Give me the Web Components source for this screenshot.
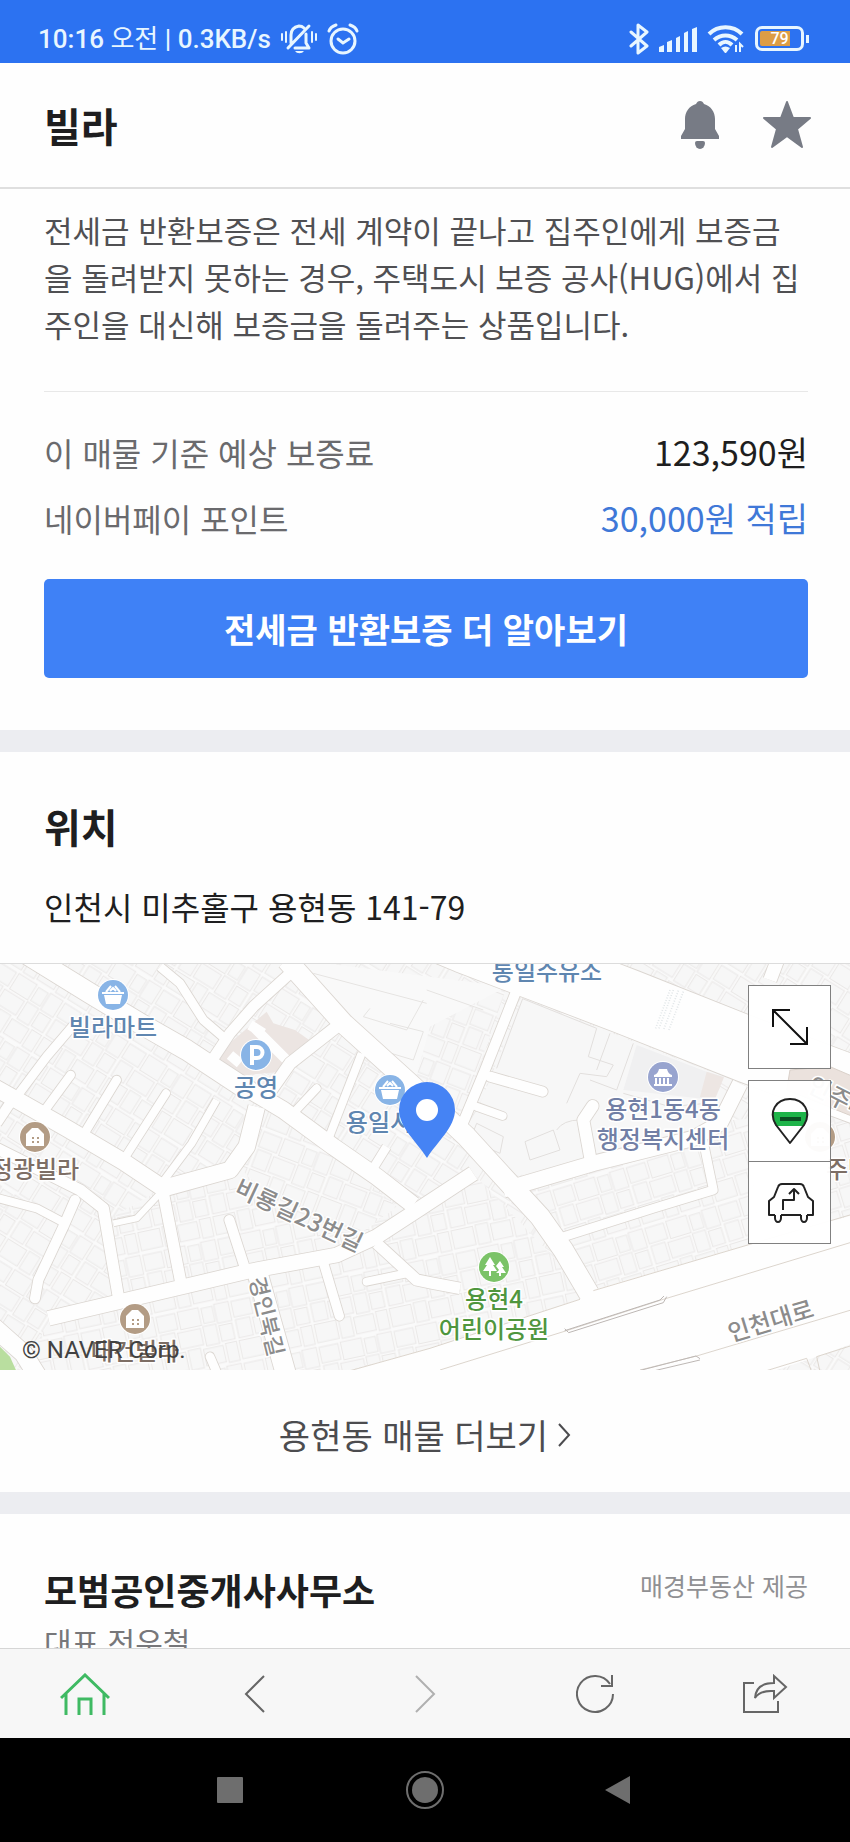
<!DOCTYPE html>
<html lang="ko">
<head>
<meta charset="UTF-8">
<meta name="viewport" content="width=device-width, initial-scale=1.0">
<title>빌라</title>
<style>
    *{
        box-sizing: border-box;
    }
    body{
        margin: 0;
        height: 100vh;
        display: flex;
        flex-direction: column;
        background: #fefefe;
        color: #1e1e20;
        font-family: "Noto Sans CJK KR", "Noto Sans", sans-serif;
        font-size: 32px;
        line-height: 48px;
        --gutter: 44px;
        --blue: #3f81f6;
        --band: #ecedf1;
    }
    main{
        flex: 1;
        min-height: 0;
        overflow: hidden;
    }
</style>
</head>
<body>
    <status-bar time="10:16 오전" speed="0.3KB/s" battery="79"></status-bar>
    <page-header>빌라</page-header>
    <main>
        <guarantee-info>
            전세금 반환보증은 전세 계약이 끝나고 집주인에게 보증금을 돌려받지 못하는 경우, 주택도시 보증 공사(HUG)에서 집주인을 대신해 보증금을 돌려주는 상품입니다.
            <cost-row slot="rows" label="이 매물 기준 예상 보증료">123,590원</cost-row>
            <cost-row slot="rows" label="네이버페이 포인트" highlight>30,000원 적립</cost-row>
            <span slot="action">전세금 반환보증 더 알아보기</span>
        </guarantee-info>
        <location-section>
            <span slot="title">위치</span>
            <span slot="address">인천시 미추홀구 용현동 141-79</span>
            <location-map></location-map>
            <span slot="more">용현동 매물 더보기</span>
        </location-section>
        <broker-info>
            모범공인중개사사무소
            <span slot="source">매경부동산 제공</span>
            <span slot="owner">대표 전우철</span>
        </broker-info>
    </main>
    <tab-bar></tab-bar>
    <system-nav></system-nav>

<script>
class BaseElement extends HTMLElement{
    constructor(){
        super()
        this.attachShadow({mode: 'open'})
    }

    render(){
        const template = document.createElement('template')
        template.innerHTML = this.getStyles() + this.getTemplate()
        this.shadowRoot.appendChild(template.content.cloneNode(true))
    }

    connectedCallback(){
        this.render()
    }
}

class StatusBar extends BaseElement{
    getStyles(){
        return `
            <style>
                :host{
                    display: flex;
                    justify-content: space-between;
                    align-items: center;
                    height: 63px;
                    padding: 14px 41px 0 38px;
                    box-sizing: border-box;
                    background: #2c72f1;
                    color: #e8f6ff;
                    font: 500 26px/32px Roboto, "Noto Sans CJK KR", sans-serif;
                }
                .side{
                    display: flex;
                    align-items: center;
                    gap: 10px;
                }
                .am{
                    font-weight: 400;
                }
                .battery{
                    display: flex;
                    align-items: center;
                    gap: 2px;
                }
                .battery-box{
                    width: 49px;
                    height: 25px;
                    box-sizing: border-box;
                    border: 3px solid #e8f6ff;
                    border-radius: 7px;
                    padding: 2px;
                    color: #fff;
                    font-size: 16px;
                    line-height: 15px;
                    text-align: center;
                    background: linear-gradient(90deg, #dd9d45 76%, transparent 76%) content-box;
                }
                .battery-tip{
                    width: 3px;
                    height: 8px;
                    background: #e8f6ff;
                }
                svg{
                    display: block;
                }
            </style>
        `
    }

    getTemplate(){
        const [clock, half] = this.getAttribute('time').split(' ')
        return `
            <div class="side">
                <span>${clock} <span class="am">${half}</span> | ${this.getAttribute('speed')}</span>
                <svg width="36" height="32" viewBox="0 0 36 32" fill="none" stroke="#e8f6ff" stroke-width="3" stroke-linecap="round" stroke-linejoin="round">
                    <path d="M10 20V12c0-5 3-8 8-9 2 0 4 1 5 2M14 25h14l-3-5v-9M7 25L28 3"/>
                    <path d="M1 11v6M5 9v10M31 9v10M35 11v6" stroke-width="2"/>
                    <path d="M14 28h9a5 4 0 0 1-9 0z" fill="#e8f6ff" stroke="none"/>
                </svg>
                <svg width="32" height="32" viewBox="0 0 32 32" fill="none" stroke="#e8f6ff" stroke-width="3" stroke-linecap="round">
                    <circle cx="16" cy="18" r="12"/>
                    <path d="M11 16l5 4 6-4M2 8c1-3 4-5 7-6M30 8c-1-3-4-5-7-6"/>
                </svg>
            </div>
            <div class="side">
                <svg width="20" height="32" viewBox="0 0 20 32" fill="none" stroke="#e8f6ff" stroke-width="3" stroke-linejoin="round" stroke-linecap="round">
                    <path d="M2 9l16 14-9 7V2l9 7L2 23"/>
                </svg>
                <svg width="38" height="26" viewBox="0 0 38 26" fill="#e8f6ff">
                    <path d="M0 26v-5l5-2v7zM8 26V16l5-2v12zM17 26V12l4-2v16zM25 26V7l4-2v21zM33 26V3l5-2v25z"/>
                </svg>
                <svg width="38" height="28" viewBox="0 0 38 28" fill="none" stroke="#e8f6ff" stroke-width="4">
                    <path d="M2 9c9-9 24-9 33 0M7 15c7-6 16-6 23 0M12 20c4-4 9-4 13 0"/>
                    <path d="M14 23c3-2 6-2 9 0l-4 5h-1z" fill="#e8f6ff" stroke="none"/>
                    <path d="M29 20v7M33 27v-8l3 3" stroke-width="2"/>
                </svg>
                <div class="battery">
                    <div class="battery-box">${this.getAttribute('battery')}</div>
                    <div class="battery-tip"></div>
                </div>
            </div>
        `
    }
}

class PageHeader extends BaseElement{
    getStyles(){
        return `
            <style>
                :host{
                    display: flex;
                    justify-content: space-between;
                    align-items: center;
                    height: 126px;
                    padding: 0 38px 0 var(--gutter);
                    box-sizing: border-box;
                    border-bottom: 2px solid #dfdfdf;
                }
                h1{
                    margin: 0;
                    font-size: 40px;
                    line-height: 56px;
                    font-weight: 700;
                }
                .actions{
                    display: flex;
                    gap: 42px;
                }
                button{
                    border: 0;
                    padding: 0;
                    background: none;
                    color: #777b85;
                }
                svg{
                    display: block;
                }
            </style>
        `
    }

    getTemplate(){
        return `
            <h1><slot></slot></h1>
            <div class="actions">
                <button type="button" aria-label="알림">
                    <svg width="40" height="50" viewBox="0 0 40 50" fill="currentColor">
                        <path d="M20 1c2 0 3 1 4 3 7 2 11 8 11 15v10l4 7v3H1v-3l4-7V19C5 12 9 6 16 4c1-2 2-3 4-3z"/>
                        <path d="M15 43q0-2 2-2h6q2 0 2 2a5 6 0 0 1-10 0z"/>
                    </svg>
                </button>
                <button type="button" aria-label="관심매물">
                    <svg width="50" height="50" viewBox="0 0 50 50" fill="currentColor" stroke="currentColor" stroke-width="2" stroke-linejoin="round">
                        <path d="M25 2l6 16h17L35 29l5 18-15-11-15 11 5-18L2 18h17z"/>
                    </svg>
                </button>
            </div>
        `
    }
}

class CostRow extends BaseElement{
    getStyles(){
        return `
            <style>
                :host{
                    display: flex;
                    justify-content: space-between;
                    color: #1e1e20;
                }
                :host([highlight]){
                    color: #3f78d8;
                }
                .label{
                    color: #6a6a6d;
                }
                .value{
                    font-size: 34px;
                }
            </style>
        `
    }

    getTemplate(){
        return `
            <span class="label">${this.getAttribute('label')}</span>
            <span class="value"><slot></slot></span>
        `
    }
}

class GuaranteeInfo extends BaseElement{
    getStyles(){
        return `
            <style>
                :host{
                    display: block;
                    padding: 17px 42px 52px var(--gutter);
                    border-bottom: 22px solid var(--band);
                }
                p{
                    margin: 0;
                    padding-right: 4px;
                    color: #505053;
                    font-size: 31px;
                    line-height: 47px;
                    word-break: break-all;
                }
                .rows{
                    display: flex;
                    flex-direction: column;
                    gap: 18px;
                    margin: 44px 0 37px;
                    padding-top: 36px;
                    border-top: 1px solid #e8e8e8;
                }
                button{
                    display: block;
                    width: 100%;
                    height: 99px;
                    border: 0;
                    border-radius: 5px;
                    background: var(--blue);
                    color: #fff;
                    font: inherit;
                    font-size: 34px;
                    font-weight: 700;
                }
            </style>
        `
    }

    getTemplate(){
        return `
            <p><slot></slot></p>
            <div class="rows"><slot name="rows"></slot></div>
            <button type="button"><slot name="action"></slot></button>
        `
    }
}

class LocationSection extends BaseElement{
    getStyles(){
        return `
            <style>
                :host{
                    display: block;
                    border-bottom: 22px solid var(--band);
                }
                .head{
                    display: flex;
                    flex-direction: column;
                    gap: 28px;
                    padding: 46px var(--gutter) 33px;
                }
                h2{
                    margin: 0;
                    font-size: 40px;
                    line-height: 56px;
                    font-weight: 700;
                }
                p{
                    margin: 0;
                }
                .more{
                    display: flex;
                    justify-content: center;
                    align-items: center;
                    gap: 9px;
                    height: 122px;
                    padding-top: 8px;
                    box-sizing: border-box;
                    font-size: 34px;
                    color: #4c4c4f;
                    text-decoration: none;
                }
            </style>
        `
    }

    getTemplate(){
        return `
            <div class="head">
                <h2><slot name="title"></slot></h2>
                <p><slot name="address"></slot></p>
            </div>
            <slot></slot>
            <a class="more" href="#">
                <slot name="more"></slot>
                <svg width="14" height="24" viewBox="0 0 14 24" fill="none" stroke="currentColor" stroke-width="2">
                    <path d="M2 1l10 11L2 23"/>
                </svg>
            </a>
        `
    }
}

// all road and block coordinates are in a 2550 x 1218 space, three units per map pixel
const ROADS = [
    {width: 60, d: 'M60 -30L270 100L420 190L560 270L750 395'},
    {width: 50, d: 'M740 385L850 450L1000 560L1130 650L1240 735'},
    {width: 60, d: 'M860 0L1030 190L1240 380L1400 530L1500 640L1620 770L1690 870L1790 1040'},
    {width: 50, d: 'M-30 375L60 425L200 505L370 605L490 685L690 630L740 560L770 440'},
    {width: 34, d: 'M488 690L545 980'},
    {width: 44, d: 'M145 1075L550 980L740 935L1010 885L1130 830L1260 745L1420 640'},
    {width: 34, d: 'M-30 555L240 690L310 745L355 1010'},
    {width: 24, d: 'M-30 708L110 745L195 790'},
    {width: 30, d: 'M225 720L190 800L115 960L105 1015', round: true},
    {width: 26, d: 'M50 410L140 290L225 190'},
    {width: 30, d: 'M-10 490L40 415'},
    {width: 30, d: 'M688 780L735 925', round: true},
    {width: 28, d: 'M965 890L1018 1068', round: true},
    {width: 32, d: 'M870 40L760 140L690 220L630 310'},
    {width: 26, d: 'M480 20L540 70L610 180L680 240'},
    {width: 36, d: 'M1010 200L870 310L800 410'},
    {width: 26, d: 'M212 345L135 450', round: true},
    {width: 26, d: 'M350 360L250 525', round: true},
    {width: 24, d: 'M498 400L370 600', round: true},
    {width: 22, d: 'M650 420L575 550L485 670'},
    {width: 24, d: 'M950 385L870 470', round: true},
    {width: 24, d: 'M1085 280L980 550'},
    {width: 26, d: 'M1160 560L1110 640'},
    {width: 18, d: 'M340 790L410 775L480 700'},
    {width: 34, d: 'M1130 850L1250 960L1300 970L1380 985'},
    {width: 24, d: 'M1220 940L1100 965', round: true},
    {width: 60, d: 'M770 930L860 1250'},
    {width: 26, d: 'M630 1190L660 1260', round: true},
    {width: 30, d: 'M1550 90L1455 330L1380 510'},
    {width: 30, d: 'M1470 350L1628 395', round: true},
    {width: 24, d: 'M1430 440L1508 468', round: true},
    {width: 46, d: 'M1510 690L1780 610L2080 535L2160 490L2220 370'},
    {width: 36, d: 'M1772 600L1750 480L1778 438', round: true},
    {width: 26, d: 'M2105 520L2140 690L1960 745L1660 840'},
    {width: 196, d: 'M1180 -150L1400 -58L1880 125L2245 270L2700 440'},
    {width: 40, d: 'M2310 60L2340 -20'},
    {width: 54, d: 'M-20 1100L70 1180L120 1260'}
]

const POIS = [
    {x: 113, y: 31, icon: 'basket', color: '#88b4e6', text: '#5f86b0', lines: ['빌라마트']},
    {x: 256, y: 91, icon: 'parking', color: '#88b4e6', text: '#5f86b0', lines: ['공영']},
    {x: 390, y: 126, icon: 'basket', color: '#88b4e6', text: '#5f86b0', lines: ['용일시장']},
    {x: 35, y: 173, icon: 'house', color: '#b39c85', text: '#7d6e65', lines: ['정광빌라']},
    {x: 135, y: 355, icon: 'house', color: '#b39c85', text: '#7d6e65', lines: ['대건빌라']},
    {x: 663, y: 113, icon: 'office', color: '#98a4cf', text: '#727fa5', lines: ['용현1동4동', '행정복지센터']},
    {x: 494, y: 303, icon: 'trees', color: '#7bc368', text: '#4f963e', lines: ['용현4', '어린이공원']},
    {x: 820, y: 173, icon: 'house', color: '#b39c85', text: '#7d6e65', lines: []}
]

const POI_ICONS = {
    basket: '<path d="M-9 0H9L7 9H-7zM-11 -3H11V-1H-11z" fill="#fff"/><path d="M-7 -3L-2 -9M7 -3L2 -9M-3 -4L0 -7L3 -4" stroke="#fff" stroke-width="2" fill="none"/>',
    parking: '<path d="M-4 10V-8H1a5 5 0 0 1 0 11H-4" fill="none" stroke="#fff" stroke-width="4"/>',
    house: '<path d="M-9 9V-3L-3 -9H3L9 -3V9z" fill="#fff"/><path d="M-3 0h2v2h-2zM2 0h2v2h-2zM-3 4h2v2h-2zM2 4h2v2h-2z" fill="#b39c85"/>',
    office: '<path d="M-9 -2Q-5 -3 -4 -8H4Q5 -3 9 -2V0H-9zM-8 1h2v6h-2zM-4 1h2v6h-2zM0 1h2v6h-2zM4 1h2v6h-2zM-9 7H9V9H-9z" fill="#fff"/>',
    trees: '<path d="M-4 -10L1 -2H-1L3 4H-3V9H-5V4H-11L-7 -2H-9zM6 -6L10 0H8L12 6H7V9H5V6H2L5 3L2 -1z" fill="#fff"/>'
}

class LocationMap extends BaseElement{
    getStyles(){
        return `
            <style>
                :host{
                    display: block;
                    position: relative;
                    height: 407px;
                    overflow: hidden;
                    border-top: 1px solid #dcdcdc;
                    box-sizing: border-box;
                }
                .map{
                    display: block;
                    width: 100%;
                    height: 100%;
                }
                .map text{
                    font-size: 24px;
                    font-weight: 500;
                    paint-order: stroke;
                    stroke: #fff;
                    stroke-width: 3px;
                    stroke-linejoin: round;
                }
                .map .street{
                    fill: #8c8c8c;
                }
                .controls{
                    position: absolute;
                    top: 21px;
                    right: 19px;
                    display: flex;
                    flex-direction: column;
                }
                .controls button{
                    display: flex;
                    justify-content: center;
                    align-items: center;
                    width: 83px;
                    height: 82px;
                    padding: 0;
                    border: 1px solid #808080;
                    background: #fffffff5;
                }
                .controls button:first-child{
                    height: 84px;
                    margin-bottom: 11px;
                }
                .controls button:last-child{
                    border-top: 0;
                    padding-left: 3px;
                }
                .copyright{
                    position: absolute;
                    left: 22px;
                    bottom: 6px;
                    color: #424242;
                    font: 24px/28px Roboto, sans-serif;
                }
            </style>
        `
    }

    getRoads(){
        const line = (road, color, extra) => `<path d="${road.d}" stroke="${color}" stroke-width="${road.width + extra}" stroke-linecap="${road.round ? 'round' : 'butt'}"/>`
        return ROADS.map(road => line(road, '#dbd6d1', 5)).join('') + ROADS.map(road => line(road, '#fefefe', 0)).join('')
    }

    getPois(){
        return POIS.map(poi => `
            <g transform="translate(${poi.x} ${poi.y})">
                <circle r="16" fill="#fff"/>
                <circle r="15" fill="${poi.color}"/>
                ${POI_ICONS[poi.icon]}
                ${poi.lines.map((line, i) => `<text y="${41 + i * 30}" text-anchor="middle" fill="${poi.text}">${line}</text>`).join('')}
            </g>
        `).join('')
    }

    getLots(name, angle){
        return `
            <pattern id="${name}" width="230" height="190" patternUnits="userSpaceOnUse" patternTransform="rotate(${angle})">
                <path d="M4 6h58v48H4zM70 4h64v54H70zM142 8h34v46h-34zM182 4h44v58h-44zM6 62h44v56H6zM58 66h70v50H58zM136 62h40v60h-40zM184 70h40v48h-40zM4 126h66v56H4zM78 124h38v60H78zM124 130h60v50h-60zM192 126h34v58h-34z" fill="#f7f7f7" stroke="#eae8e7" stroke-width="3"/>
            </pattern>
        `
    }

    getTemplate(){
        return `
            <svg class="map" viewBox="0 0 850 406" preserveAspectRatio="xMidYMid slice">
                <defs>
                    ${this.getLots('lots-a', 32)}
                    ${this.getLots('lots-b', -12)}
                    ${this.getLots('lots-c', -17)}
                    ${this.getLots('lots-d', 21)}
                </defs>
                <rect width="850" height="406" fill="#fafafa"/>
                <g transform="translate(0 -4) scale(.33333)" fill="none" stroke-linejoin="round">
                    <path d="M0 0H2550V1240H0z" fill="url(#lots-a)"/>
                    <path d="M340 770L480 690L700 640L1230 740L1420 640L1800 1040L1000 1240H60L150 1080L340 1000z" fill="#fafafa"/>
                    <path d="M340 770L480 690L700 640L1230 740L1420 640L1800 1040L1000 1240H60L150 1080L340 1000z" fill="url(#lots-b)"/>
                    <path d="M715 620L790 445L1000 580L1190 740L1080 820L900 800z" fill="#fafafa"/>
                    <path d="M715 620L790 445L1000 580L1190 740L1080 820L900 800z" fill="url(#lots-d)"/>
                    <path d="M1540 680L2200 480L2550 460V800L1780 1000z" fill="#fafafa"/>
                    <path d="M1540 680L2200 480L2550 460V800L1780 1000z" fill="url(#lots-c)"/>
                    <path d="M900 0L1520 80L1370 520L1240 380L1040 190z" fill="#f9f9f9"/>
                    <path d="M1290 200L1520 80L1370 520L1240 380z" fill="url(#lots-d)"/>
                    <path d="M1568 116L2170 350L2100 520L1700 620L1505 655L1400 530z" fill="#f7f7f7"/>
                    <path d="M940 40L1280 130M1270 120L1220 210L1090 170L1110 145M1170 190L1270 215L1240 300L1140 270M1280 90L1450 150" stroke="#e6e4e2" stroke-width="3"/>
                    <path d="M1490 325L1568 116L1790 205L1765 290L1840 315L1820 350L1740 340L1700 430M1830 220L1790 330M1900 250L1850 390L1770 360M1410 540L1430 490L1510 530L1500 580zM1575 545L1660 510L1680 570L1590 600zM1670 510Q1690 480 1740 480M1870 400L2010 440L2120 430" stroke="#e2dfdd" stroke-width="3"/>
                    <path d="M1910 255L2120 335L2170 350L2140 420L1870 390z" fill="#f0f0f1"/>
                    <path d="M2120 335L2172 352L2140 430L2100 410z" fill="#ede6e3"/>
                    <path d="M800 155L820 190L885 210L935 245L870 297L845 335L690 350L632 322L700 240z" fill="#ece5e2"/>
                    <path d="M760 200L860 300M690 285L720 310M750 195L790 220" stroke="#fefefe" stroke-width="30"/>
                    ${this.getRoads()}
                    <path d="M2370 330L2490 320L2560 350V470L2360 390z" fill="#ebe2dd" stroke="#d9d0c9" stroke-width="3"/>
                    <path d="M2010 90L1965 210M2020 90L1975 210M2035 92L1990 212M2050 95L2005 215" stroke="#e1e6e8" stroke-width="5" stroke-dasharray="3 5"/>
                    <path d="M1040 1235L1290 1165L1740 1018L1780 990L2260 850L2560 765V1150L2450 1190L2300 1240z" fill="#fefefe"/>
                    <path d="M1040 1235L1290 1165L1740 1018M1780 992L2260 850L2560 762M1320 1230L1700 1112L1990 1018L2560 845M1920 1230L2090 1188L2560 1048M2290 1235L2420 1195L2435 1235M2460 1235L2450 1190L2560 1155" stroke="#dcd5cd" stroke-width="3"/>
                    <path d="M1694 1106L1706 1118L1990 1028L2000 1010M1694 1112L1980 1020L1992 1008M1910 1234L2088 1188L2100 1196M1930 1240L2100 1200" stroke="#bdb7b4" stroke-width="3"/>
                    <path d="M0 1160L30 1190L50 1235H0z" fill="#b9de9f"/>
                </g>
                <text x="547" y="16" text-anchor="middle" fill="#5f86b0">통일주유소</text>
                ${this.getPois()}
                <text x="826" y="214" fill="#7d6e65">주택</text>
                <text class="street" transform="translate(233 230) rotate(25)">비룡길23번길</text>
                <text class="street" transform="translate(249 315) rotate(76)" style="font-size: 22px">경인북길</text>
                <text class="street" transform="translate(731 378) rotate(-17)">인천대로</text>
                <text class="street" transform="translate(806 127) rotate(27)">인주대로</text>
                <path d="M427 194C417 178 399 163 399 146a28 28 0 0 1 56 0C455 163 437 178 427 194z" fill="#4583f4"/>
                <circle cx="427" cy="146" r="11" fill="#fff"/>
            </svg>
            <div class="controls">
                <button type="button" aria-label="지도 크게 보기">
                    <svg width="36" height="36" viewBox="0 0 36 36" fill="none" stroke="#111" stroke-width="2">
                        <path d="M2 2L34 34M1 18V1H18M18 35H35V18"/>
                    </svg>
                </button>
                <button type="button" aria-label="거리뷰">
                    <svg width="38" height="48" viewBox="0 0 38 48">
                        <path d="M2 15h34v8l-3 6H5l-3-6z" fill="#1eb449"/>
                        <path d="M9 20h21v4H9z" fill="#0b4d22"/>
                        <path d="M19 46L5 28C-3 15 5 2 19 2s22 13 14 26z" fill="none" stroke="#222" stroke-width="2" stroke-linejoin="round"/>
                    </svg>
                </button>
                <button type="button" aria-label="길찾기">
                    <svg width="46" height="40" viewBox="0 0 46 40" fill="none" stroke="#222" stroke-width="2" stroke-linejoin="round">
                        <path d="M7 32H1V18l5-4L10 4q1-3 4-3h18q3 0 4 3l4 10 5 4v14h-6M13 32h20"/>
                        <path d="M7 32v3a3 4 0 0 0 6 0v-3M33 32v3a3 4 0 0 0 6 0v-3"/>
                        <path d="M15 27V17h11V7M21 11l5-5 5 5"/>
                    </svg>
                </button>
            </div>
            <span class="copyright">© NAVER Corp.</span>
        `
    }
}

class BrokerInfo extends BaseElement{
    getStyles(){
        return `
            <style>
                :host{
                    display: block;
                    padding: 47px 42px 0 var(--gutter);
                }
                .head{
                    display: flex;
                    justify-content: space-between;
                    align-items: flex-start;
                }
                h2{
                    margin: 0;
                    font-size: 36px;
                    line-height: 56px;
                    font-weight: 700;
                }
                .source{
                    font-size: 25px;
                    line-height: 48px;
                    color: #909093;
                }
                p{
                    margin: 0;
                    font-size: 30px;
                    color: #77777a;
                }
            </style>
        `
    }

    getTemplate(){
        return `
            <div class="head">
                <h2><slot></slot></h2>
                <span class="source"><slot name="source"></slot></span>
            </div>
            <p><slot name="owner"></slot></p>
        `
    }
}

class TabBar extends BaseElement{
    getStyles(){
        return `
            <style>
                :host{
                    position: relative;
                    display: grid;
                    grid-template-columns: repeat(5, 1fr);
                    height: 90px;
                    box-sizing: border-box;
                    border-top: 1px solid #d6d6d6;
                    background: #f7f7f7;
                }
                button{
                    display: flex;
                    justify-content: center;
                    align-items: center;
                    border: 0;
                    padding: 0;
                    background: none;
                    color: #666;
                }
                .home{
                    color: #3fba63;
                }
                .forward{
                    color: #b0b0b0;
                }
                svg{
                    fill: none;
                    stroke: currentColor;
                    stroke-width: 2px;
                }
                .home svg{
                    stroke-width: 3px;
                }
            </style>
        `
    }

    getTemplate(){
        return `
            <button type="button" class="home" aria-label="홈">
                <svg width="50" height="42" viewBox="0 0 50 42"><path d="M1 25L25 2L49 25M6 21V42M44 21V42M19 42V26H31V42"/></svg>
            </button>
            <button type="button" aria-label="뒤로">
                <svg width="22" height="38" viewBox="0 0 22 38"><path d="M20 1L2 19L20 37"/></svg>
            </button>
            <button type="button" class="forward" aria-label="앞으로">
                <svg width="22" height="38" viewBox="0 0 22 38"><path d="M2 1L20 19L2 37"/></svg>
            </button>
            <button type="button" aria-label="새로고침">
                <svg width="38" height="40" viewBox="0 0 38 40"><path d="M37 20A18 18 0 1 1 34 10M36 1V12H25"/></svg>
            </button>
            <button type="button" aria-label="공유">
                <svg width="46" height="40" viewBox="0 0 46 40"><path d="M12 9H2V38H36V27M32 2L44 13L32 24V17Q18 16 13 24Q14 9 32 9z"/></svg>
            </button>
        `
    }
}

class SystemNav extends BaseElement{
    getStyles(){
        return `
            <style>
                :host{
                    display: flex;
                    justify-content: center;
                    align-items: center;
                    gap: 155px;
                    height: 104px;
                    background: #000;
                }
                button{
                    border: 0;
                    padding: 0;
                    background: none;
                }
                svg{
                    display: block;
                    fill: #6e6e6e;
                }
            </style>
        `
    }

    getTemplate(){
        return `
            <button type="button" aria-label="최근 앱">
                <svg width="40" height="40" viewBox="0 0 40 40"><rect x="7" y="7" width="26" height="26" rx="1"/></svg>
            </button>
            <button type="button" aria-label="홈 화면">
                <svg width="40" height="40" viewBox="0 0 40 40"><circle cx="20" cy="20" r="13"/><circle cx="20" cy="20" r="18" fill="none" stroke="#6e6e6e" stroke-width="2"/></svg>
            </button>
            <button type="button" aria-label="이전">
                <svg width="40" height="40" viewBox="0 0 40 40"><path d="M5 20L30 6V34z"/></svg>
            </button>
        `
    }
}

customElements.define('status-bar', StatusBar)
customElements.define('page-header', PageHeader)
customElements.define('cost-row', CostRow)
customElements.define('guarantee-info', GuaranteeInfo)
customElements.define('location-section', LocationSection)
customElements.define('location-map', LocationMap)
customElements.define('broker-info', BrokerInfo)
customElements.define('tab-bar', TabBar)
customElements.define('system-nav', SystemNav)
</script>
</body>
</html>
